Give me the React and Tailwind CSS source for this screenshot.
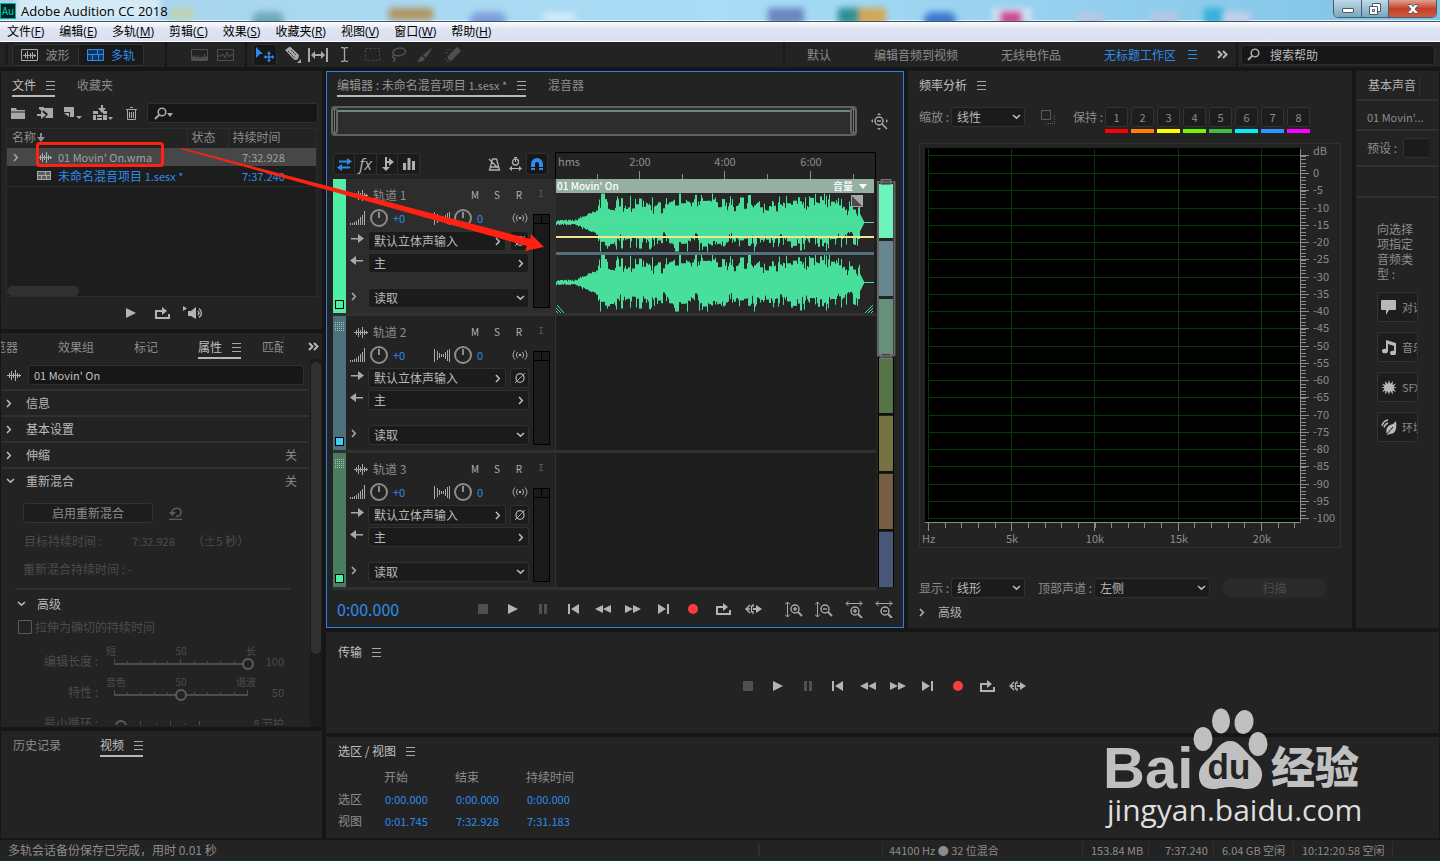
import React, { useState } from 'react';
import clsx from 'clsx';

const menus = [
  ['文件', 'F'], ['编辑', 'E'], ['多轨', 'M'], ['剪辑', 'C'], ['效果', 'S'],
  ['收藏夹', 'R'], ['视图', 'V'], ['窗口', 'W'], ['帮助', 'H'],
];

const tracks = [
  { id: 1, strip: 'bg-[#4df0a5]', dot: 'bg-[#4df0a5]', active: true },
  { id: 2, strip: 'bg-[#4a717c]', dot: 'bg-[#45ccf0]' },
  { id: 3, strip: 'bg-[#4a7c5f]', dot: 'bg-[#4df0a5]' },
];

const holds = [
  'bg-[#ff0000]', 'bg-[#ff8000]', 'bg-[#ffff00]', 'bg-[#72f500]',
  'bg-[#3fbf3f]', 'bg-[#00ecff]', 'bg-[#2d96ff]', 'bg-[#ff00ff]',
];

/* ---------- icons ---------- */

const Svg = ({ w, h, className, children }) => (
  <svg width={w} height={h} viewBox={`0 0 ${w} ${h}`} fill="currentColor" className={clsx('shrink-0', className)} aria-hidden="true">
    {children}
  </svg>
);

const MenuIcon = ({ className }) => (
  <Svg w={9} h={9} className={className}>
    <path d="M0 0h9v1H0zM0 4h9v1H0zM0 8h9v1H0z" />
  </Svg>
);

const Chevron = ({ down, className }) =>
  down ? (
    <Svg w={9} h={6} className={className}><path d="M1 1l3.5 3.2L8 1" fill="none" stroke="currentColor" strokeWidth="1.6" /></Svg>
  ) : (
    <Svg w={6} h={9} className={className}><path d="M1 1l3.3 3.5L1 8" fill="none" stroke="currentColor" strokeWidth="1.6" /></Svg>
  );

const DoubleChevron = () => (
  <Svg w={11} h={9}><path d="M1 1l3.5 3.5L1 8M6 1l3.5 3.5L6 8" fill="none" stroke="#b8b8b8" strokeWidth="2" /></Svg>
);

const WaveIcon = ({ className }) => (
  <Svg w={14} h={11} className={className}>
    <path d="M0 5h14v1H0zM2 3h1v5H2zM4 1h1v9H4zM6 3h1v5H6zM8 0h1v11H8zM10 3h1v5h-1zM12 4h1v3h-1z" />
  </Svg>
);

const SessionIcon = ({ className }) => (
  <Svg w={14} h={9} className={className}>
    <path d="M0 0h14v9H0z" />
    <path d="M1 1h7v3H1zM9 1h4v3H9zM1 5h3v3H1zM5 5h4v3H5zM10 5h3v3h-3z" fill="#000" opacity=".45" />
  </Svg>
);

const Search = ({ className }) => (
  <Svg w={13} h={13} className={className}>
    <circle cx="8" cy="5" r="3.8" fill="none" stroke="currentColor" strokeWidth="1.6" />
    <path d="M5.5 7.5L1 12" stroke="currentColor" strokeWidth="2" />
  </Svg>
);

const Loop = () => (
  <Svg w={15} h={12}>
    <path d="M0 3h6v2H2v5h11V7h2v5H0z" />
    <path d="M7 0l5 4-5 4V5H5V3h2z" />
  </Svg>
);

const Skip = () => (
  <Svg w={17} h={12}>
    <path d="M5 2L1 6l4 4M2 6h3M8 1v3M8 8v3M6.500 2.500v7" fill="none" stroke="currentColor" strokeWidth="1.3" />
    <path d="M8 5h3V2l6 4-6 4V7H8z" />
  </Svg>
);

const transport = [
  { label: '停止', dim: true, icon: <Svg w={10} h={10}><path d="M0 0h10v10H0z" /></Svg> },
  { label: '播放', icon: <Svg w={10} h={10}><path d="M0 0l10 5-10 5z" /></Svg> },
  { label: '暂停', dim: true, icon: <Svg w={8} h={10}><path d="M0 0h3v10H0zM5 0h3v10H5z" /></Svg> },
  { label: '移到上一个', icon: <Svg w={11} h={10}><path d="M0 0h2v10H0zM11 0v10L3 5z" /></Svg> },
  { label: '快退', icon: <Svg w={16} h={8}><path d="M8 0v8L0 4zM16 0v8L8 4z" /></Svg> },
  { label: '快进', icon: <Svg w={16} h={8}><path d="M0 0l8 4-8 4zM8 0l8 4-8 4z" /></Svg> },
  { label: '移到下一个', icon: <Svg w={11} h={10}><path d="M9 0h2v10H9zM0 0l8 5-8 5z" /></Svg> },
  { label: '录制', icon: <Svg w={10} h={10}><circle cx="5" cy="5" r="5" fill="#f93c3c" /></Svg> },
  { label: '循环播放', icon: <Loop /> },
  { label: '跳过所选项目', icon: <Skip /> },
];

const Transport = () => (
  <div className="flex items-center text-[#b4b4b4]">
    {transport.map((t) => (
      <button key={t.label} type="button" aria-label={t.label} className={clsx('flex h-5 w-[30px] items-center justify-center', t.dim && 'text-[#505050]')}>
        {t.icon}
      </button>
    ))}
  </div>
);

const ZoomIcon = ({ plus, horizontal }) => (
  <Svg w={18} h={17}>
    {horizontal ? (
      <path d="M1 2.500h16M3.500 0L1 2.500 3.500 5M14.500 0L17 2.500 14.500 5" fill="none" stroke="currentColor" />
    ) : (
      <path d="M2.500 1v15M0 3.500L2.500 1 5 3.500M0 13.500L2.500 16 5 13.500" fill="none" stroke="currentColor" />
    )}
    <g fill="none" stroke="currentColor" strokeWidth="1.4">
      <circle cx="10" cy={horizontal ? 10 : 8} r="4" />
      <path d={horizontal ? 'M13 13l4 4' : 'M13 11l4 4'} strokeWidth="2" />
      <path d={horizontal ? 'M8 10h4' : 'M8 8h4'} />
      {plus && <path d={horizontal ? 'M10 8v4' : 'M10 6v4'} />}
    </g>
  </Svg>
);

/* ---------- shared bits ---------- */

const Tab = ({ active, underline = true, menu, children, className }) => (
  <button
    type="button"
    className={clsx(
      'flex h-[26px] shrink-0 items-center gap-2.5 border-b-2 pt-1 whitespace-nowrap',
      active ? 'text-[#c0c0c0]' : 'text-[#8c8c8c]',
      active && underline ? 'border-[#b9b9b9]' : 'border-transparent',
      className,
    )}
  >
    {children}
    {menu && <MenuIcon className="text-[#a8a8a8]" />}
  </button>
);

const Select = ({ label, value, className, right }) => (
  <div className={clsx('relative h-5', className)}>
    <select aria-label={label} defaultValue={value} className="h-full w-full appearance-none rounded-[3px] border border-[#303030] bg-[#1b1b1b] pl-[5px] text-xs leading-4 text-[#b8b8b8]">
      <option>{value}</option>
    </select>
    <span className="pointer-events-none absolute inset-y-0 right-1 flex w-[9px] items-center justify-center text-[#b8b8b8]">
      <Chevron down={!right} />
    </span>
  </div>
);

const Rule = ({ className }) => <div className={clsx('h-[2px] shrink-0 bg-[#313131]', className)} />;

/* ---------- window chrome ---------- */

const TitleBar = () => (
  <header className="relative flex h-[22px] items-center overflow-hidden border-b border-[#3c5566] bg-linear-to-r from-[#a9d3ec] via-[#a9dcf6] to-[#7fc3e6] shadow-[inset_0_-1px_0_#e4f3fb]">
    <div className="absolute inset-0 blur-[3px]">
      <div className="absolute -top-1 left-4 h-6 w-36 bg-[#d5eaf5]" />
      <div className="absolute top-2 left-[170px] h-3 w-6 bg-[#bfd3b4]" />
      <div className="absolute top-3 left-[252px] h-4 w-8 rounded-full bg-[#6fa9b6]" />
      <div className="absolute top-2 left-[389px] h-3 w-11 bg-[#b0955f]" />
      <div className="absolute top-3 left-[470px] h-4 w-9 rounded-full bg-[#7e9edb]" />
      <div className="absolute top-3 left-[543px] h-3 w-8 bg-[#cfeaf9]" />
      <div className="absolute top-2 left-[768px] h-4 w-9 bg-[#6c86bf]" />
      <div className="absolute top-2 left-[838px] h-4 w-6 bg-[#2f8f95]" />
      <div className="absolute top-2 left-[858px] h-4 w-7 bg-[#d0a858]" />
      <div className="absolute top-3 left-[924px] h-4 w-8 rounded-full bg-[#3d78d0]" />
      <div className="absolute top-2 left-[992px] h-4 w-10 bg-[#cfe0f2]" />
      <div className="absolute top-3 left-[1001px] h-3 w-5 bg-[#d23f86]" />
      <div className="absolute top-3 left-[1076px] h-3 w-7 bg-[#b5c8e4]" />
      <div className="absolute top-3 left-[1150px] h-3 w-7 bg-[#b5c8e4]" />
      <div className="absolute top-2 left-[1204px] h-4 w-5 bg-[#35b0d8]" />
      <div className="absolute top-3 left-[1222px] h-3 w-7 bg-[#c5cfe8]" />
    </div>
    <span className="relative flex h-4 w-4 items-center justify-center border border-[#00b6a0] bg-[#00201f] text-[10px] leading-3 text-[#00d8bd]">Au</span>
    <h1 className="relative ml-[5px] font-['Open_Sans','Noto_Sans_CJK_SC',sans-serif] text-[13px] leading-4 text-black">Adobe Audition CC 2018</h1>
    <div className="relative mr-[3px] ml-auto flex h-[18px] self-start overflow-hidden rounded-b-[5px] border border-t-0 border-[#42606f] text-white">
      <button type="button" aria-label="最小化" className="flex w-7 items-end justify-center border-r border-[#42606f] bg-linear-to-b from-[#c0dae8] to-[#7ba4bb] pb-1">
        <span className="h-[5px] w-3 rounded-[1px] border border-[#4a5a66] bg-white" />
      </button>
      <button type="button" aria-label="还原" className="flex w-[27px] items-center justify-center border-r border-[#42606f] bg-linear-to-b from-[#c0dae8] to-[#7ba4bb]">
        <Svg w={12} h={12}>
          <path d="M3.500 .5h8v8h-8z" stroke="#4a5a66" />
          <path d="M.5 3.500h8v8h-8zM3.500 6.500h2v2h-2z" stroke="#4a5a66" fillRule="evenodd" />
        </Svg>
      </button>
      <button type="button" aria-label="关闭" className="flex w-[47px] items-center justify-center bg-linear-to-b from-[#e0a090] via-[#c4402c] to-[#d0583c]">
        <Svg w={12} h={10}>
          <path d="M1 .5h3l2 2 2-2h3v1L8 5l3 3.500v1H8l-2-2-2 2H1v-1L4 5 1 1.500z" stroke="#5a5a66" />
        </Svg>
      </button>
    </div>
  </header>
);

const MenuBar = () => (
  <nav className="flex h-5 items-center gap-[15px] border-b border-white bg-linear-to-b from-[#fbfcfe] via-[#dfe4f2] via-40% to-[#dbe0f2] pl-[7px] font-['Open_Sans','Noto_Sans_CJK_SC',sans-serif] text-xs leading-4 text-black">
    {menus.map(([name, key]) => (
      <button key={key} type="button" className="whitespace-nowrap">
        {name}(<u>{key}</u>)
      </button>
    ))}
  </nav>
);

const ToolBar = () => (
  <div className="flex h-[25px] items-center bg-[#232323] text-[#a8a8a8]">
    <Svg w={3} h={20} className="ml-[5px] text-[#111]"><path d="M1.500 0v20" stroke="currentColor" strokeWidth="3" strokeDasharray="1 1" /></Svg>
    <div className="ml-1 flex h-[22px] rounded-[3px] border border-[#333] bg-[#191919]">
      <button type="button" className="flex w-[65px] items-center justify-center gap-[7px] rounded-l-[3px] bg-[#202020] text-[#8c8c8c]">
        <Svg w={17} h={12} className="text-[#a8a8a8]">
          <path d="M.5.5h16v11H.5z" fill="none" stroke="currentColor" />
          <path d="M2 6.500h13M4.500 4v5M6.500 2v8M9.500 4v5M11.500 3v7M13.500 5v3" stroke="currentColor" />
        </Svg>
        波形
      </button>
      <button type="button" className="flex w-[65px] items-center justify-center gap-[7px] border-l border-[#333] text-[#2d8ceb]">
        <Svg w={17} h={12}><path d="M.5.5h16v11H.5zM.5 5.500h16M10.500.5v5M5.500 5.500v6M11.500 5.500v6" fill="#10375f" stroke="currentColor" /></Svg>
        多轨
      </button>
    </div>
    <span className="ml-[21px] h-full w-[2px] bg-[#161616]" />
    <Svg w={17} h={12} className="ml-6 text-[#505050]"><path d="M.5.5h16v11H.5z" fill="none" stroke="currentColor" /><path d="M1 11V8l2-2v2h1V7h1v2l1-1h1V6h1v3h2V7h1v1h2V5h1v3l2-1v4z" /></Svg>
    <Svg w={17} h={12} className="ml-[9px] text-[#505050]"><path d="M.5.5h16v11H.5zM1 7h3l2-2 2 4 2-6 2 5 1-2h3" fill="none" stroke="currentColor" /></Svg>
    <span className="ml-[11px] h-full w-[2px] bg-[#161616]" />
    <button type="button" aria-label="移动工具" className="ml-1.5 flex h-[22px] w-6 items-center justify-center rounded-[3px] border border-[#2e2e2e] bg-[#171717] text-[#2d8ceb]">
      <Svg w={18} h={15}>
        <path d="M0 0l7 7H4l-4 4z" />
        <path d="M13 4l2 3h-1.300v2.300H16V8l2.500 2L16 12v-1.300h-2.300V13H15l-2 2.500L11 13h1.300v-2.300H10V12l-2.500-2L10 8v1.300h2.300V7H11z" />
      </Svg>
    </button>
    <Svg w={18} h={17} className="ml-[7px]"><path d="M1 4l5-3.500L15 9l-1 4.500-3.500.5z" /><path d="M4 5l7 7M7 4l5 5" stroke="#232323" strokeDasharray="2 1" /><path d="M17 13v4h-4z" /></Svg>
    <Svg w={20} h={14} className="ml-1.5"><path d="M0 0h2v14H0zM18 0h2v14h-2zM3 7l4-4v3h6V3l4 4-4 4V8H7v3z" /></Svg>
    <Svg w={9} h={15} className="ml-3"><path d="M1 .5h2l1.500 1L6 .5h2M1 14.500h2l1.500-1 1.500 1h2M4.500 1.500v12" fill="none" stroke="currentColor" strokeWidth="1.300" /></Svg>
    <Svg w={15} h={13} className="ml-4 text-[#505050]"><path d="M.5.5h14v12H.5z" fill="none" stroke="currentColor" strokeDasharray="2 2" /></Svg>
    <Svg w={17} h={15} className="ml-2.5 text-[#505050]"><path d="M4 8C1 5 5 1 10 1s6 3 5 5-7 4-11 2zm0 0c-2 1-2 3 0 3s1 2-1 4" fill="none" stroke="currentColor" strokeWidth="1.500" /></Svg>
    <Svg w={16} h={15} className="ml-2.5 text-[#505050]"><path d="M16 0L9 11 6 8zM5 9l3 3c-1 2-4 3-8 3 2-1 2-5 5-6z" /></Svg>
    <Svg w={17} h={16} className="ml-[11px] text-[#505050]"><path d="M13 0l4 4-9 9c-2 2-6-2-4-4z" /><path d="M2 2.500h6M1 5.500h4M1 12.500h2M3 14.500h3" stroke="currentColor" strokeDasharray="1 1" /></Svg>
    <div className="ml-auto flex h-full items-center text-[#8c8c8c]">
      <span className="h-full w-[2px] bg-[#191919]" />
      <button type="button" className="ml-[22px]">默认</button>
      <button type="button" className="ml-[43px]">编辑音频到视频</button>
      <button type="button" className="ml-[43px]">无线电作品</button>
      <button type="button" className="ml-[43px] flex items-center gap-3 text-[#2d8ceb]">无标题工作区 <MenuIcon /></button>
      <button type="button" aria-label="更多工作区" className="ml-5"><DoubleChevron /></button>
      <span className="ml-2 h-full w-[2px] bg-[#171717]" />
    </div>
    <label className="mr-[5px] ml-[3px] flex h-5 w-[194px] items-center rounded-[3px] border border-[#2e2e2e] bg-[#171717] pl-[5px]">
      <Search />
      <input type="search" aria-label="搜索帮助" placeholder="搜索帮助" className="ml-2.5 w-full bg-transparent leading-4 text-[#a8a8a8] outline-none placeholder:text-[#b8b8b8]" />
    </label>
  </div>
);

/* ---------- left column ---------- */

const FilesPanel = () => (
  <section className="flex h-[258px] shrink-0 flex-col bg-[#232323]">
    <div className="flex gap-[22px] pl-[11px]">
      <Tab active menu>文件</Tab>
      <Tab>收藏夹</Tab>
    </div>
    <div className="mt-1.5 mr-1 flex h-5 items-center pl-2.5 text-[#a8a8a8]">
      <button type="button" aria-label="打开文件"><Svg w={14} h={11}><path d="M0 0h5l1 2h8v1.500H0zM0 4.500h14V11H0z" /></Svg></button>
      <button type="button" aria-label="导入文件" className="ml-3"><Svg w={16} h={12}><path d="M2 0h5v1h9v10H8l3-4-5-4v2L2 2z" /><path d="M0 7h4V4l5 4-5 4V9H0z" /></Svg></button>
      <button type="button" aria-label="新建" className="ml-[11px]"><Svg w={18} h={13}><path d="M0 0h10v10H6V5H0zM0 6h5v4z" /><path d="M12 9h6l-3 3z" /></Svg></button>
      <button type="button" aria-label="插入到多轨混音" className="ml-[11px]"><Svg w={20} h={16}><path d="M0 6h5v3H0zM10 6h4v3h-4zM0 10h3v5H0zM4 10h5v2H4zM10 10h4v5h-4zM4 13h5v2H4zM8 0h2v3h3L9 8 5 3h3z" /><path d="M15 12h5l-2.500 3z" /></Svg></button>
      <button type="button" aria-label="删除" className="ml-[13px]"><Svg w={11} h={13}><path d="M4 .5h3M0 2.500h11M1.500 3v9.500h8V3M3.500 5v6M5.500 5v6M7.500 5v6" fill="none" stroke="currentColor" /></Svg></button>
      <label className="ml-2.5 flex h-5 flex-1 items-center rounded-[3px] border border-[#303030] bg-[#171717] pl-1.5">
        <Search />
        <Svg w={6} h={4} className="mt-1"><path d="M0 0h6L3 4z" /></Svg>
        <input type="search" aria-label="搜索文件" className="w-full bg-transparent outline-none" />
      </label>
    </div>
    <div className="mx-[5px] mt-[5px] flex flex-1 flex-col border border-[#2c2c2c] bg-[#1d1d1d]">
      <table className="w-full table-fixed border-collapse text-left">
        <colgroup><col className="w-[180px]" /><col className="w-[41px]" /><col /></colgroup>
        <thead className="bg-[#232323] text-[#8c8c8c]">
          <tr className="h-[19px]">
            <th className="pb-[3px] pl-[5px] font-normal">
              <span className="flex items-center">名称<Svg w={8} h={9} className="ml-px"><path d="M3 0h2v4h3L4 9 0 4h3z" /></Svg></span>
            </th>
            <th className="border-l border-[#2e2e2e] pb-[3px] pl-1 font-normal">状态</th>
            <th className="border-l border-[#2e2e2e] pb-[3px] pl-1 font-normal">持续时间</th>
          </tr>
        </thead>
        <tbody>
          <tr className="h-[18px] bg-[#474747] text-[#a0a0a0]">
            <td colSpan={2}>
              <span className="flex items-center pl-1.5"><Chevron /><WaveIcon className="ml-[19px] text-[#b0b0b0]" /><span className="ml-1.5 text-[11px]">01 Movin' On.wma</span></span>
            </td>
            <td className="pl-3.5 text-[11px]">7:32.928</td>
          </tr>
          <tr className="h-5 border-b border-[#2c2c2c] text-[#2d8ceb]">
            <td colSpan={2}>
              <span className="flex items-center pl-[30px]"><SessionIcon className="text-[#a8a8a8]" /><span className="ml-[7px]">未命名混音项目 <span className="text-[11px]">1.sesx *</span></span></span>
            </td>
            <td className="pl-3.5 text-[11px]">7:37.240</td>
          </tr>
        </tbody>
      </table>
      <div className="mt-auto h-2.5 w-[72px] rounded-full bg-[#313131]" />
    </div>
    <div className="flex h-8 items-center justify-center gap-[19px] pl-[5px] text-[#b4b4b4]">
      <button type="button" aria-label="播放文件"><Svg w={10} h={10}><path d="M0 0l10 5-10 5z" /></Svg></button>
      <button type="button" aria-label="循环播放文件"><Loop /></button>
      <button type="button" aria-label="自动播放" className="-ml-1.5"><Svg w={20} h={14}><path d="M0 0l4 2.500L0 5zM5 5h3l5-4v12L8 10H5z" /><path d="M15 5q2 2 0 4M16 2.500q5 4.500 0 9" fill="none" stroke="currentColor" strokeWidth="1.400" /></Svg></button>
    </div>
  </section>
);

const Group = ({ title, open, state }) => (
  <>
    <Rule className="mx-px" />
    <button type="button" className="flex h-6 shrink-0 items-center pr-[13px] pl-[5px] text-[#b8b8b8]">
      <span className="w-5"><Chevron down={open} /></span>
      {title}
      {state && <span className="ml-auto text-[#8c8c8c]">{state}</span>}
    </button>
  </>
);

const Slider = ({ label, left, mid, right, value, unit, compact }) => (
  <label className="flex h-[31px] shrink-0 text-[#4c4c4c]">
    <span className="w-[97px] pt-2 text-right">{label} :</span>
    <span className="ml-2 flex w-[150px] flex-col">
      <span className="flex h-[13px] justify-between text-[10px] leading-3"><span>{left}</span><span>{mid}</span><span>{right}</span></span>
      <span className={clsx('relative flex flex-col', compact ? 'mr-[49px] ml-2' : 'mx-2')}>
        {compact ? (
          <Svg w={93} h={12} className="absolute">
            <path d="M0 6h1M18 6h75" stroke="currentColor" strokeWidth="2" />
            <path d="M26.500 1v10M42.500 3v6M56.500 1v10M71.500 3v6M85.500 1v10" stroke="currentColor" />
          </Svg>
        ) : (
          <Svg w={134} h={12} className="absolute">
            <path d="M0 6h134" stroke="currentColor" strokeWidth="2" />
            <path d="M.5 1v5M13.500 3v3M26.500 3v3M40.500 3v3M53.500 3v3M66.500 1v5M80.500 3v3M93.500 3v3M106.500 3v3M120.500 3v3M133.500 1v5" stroke="currentColor" />
          </Svg>
        )}
        <input
          type="range"
          disabled
          defaultValue={value}
          className="relative -mx-1.5 h-3 appearance-none bg-transparent [&::-webkit-slider-thumb]:h-3 [&::-webkit-slider-thumb]:w-3 [&::-webkit-slider-thumb]:appearance-none [&::-webkit-slider-thumb]:rounded-full [&::-webkit-slider-thumb]:border-2 [&::-webkit-slider-thumb]:border-[#5c5c5c] [&::-webkit-slider-thumb]:bg-[#232323]"
        />
      </span>
    </span>
    <span className="flex w-7 justify-end pt-2 text-[11px] whitespace-nowrap">{unit ?? value}</span>
  </label>
);

const PropertiesPanel = () => (
  <section className="flex min-h-[394px] flex-[1_1_0px] flex-col overflow-hidden bg-[#232323]">
    <div className="flex shrink-0">
      <div className="-ml-[7px] flex w-[289px] gap-10 overflow-hidden">
        <Tab>览器</Tab>
        <Tab>效果组</Tab>
        <Tab>标记</Tab>
        <Tab active menu>属性</Tab>
        <Tab className="-ml-[19px]">匹配</Tab>
      </div>
      <span className="h-5 w-px self-center bg-[#313131]" />
      <button type="button" aria-label="更多面板" className="ml-6"><DoubleChevron /></button>
    </div>
    <div className="flex min-h-0 flex-1">
      <div className="flex h-[366px] min-w-0 flex-1 flex-col overflow-hidden">
        <div className="mt-1.5 mb-1 flex h-5 shrink-0 items-center pl-1.5">
          <WaveIcon className="text-[#b0b0b0]" />
          <input aria-label="剪辑名称" defaultValue="01 Movin' On" className="mr-1.5 ml-[7px] h-5 min-w-0 flex-1 rounded-[3px] border border-[#303030] bg-[#171717] pl-[5px] text-[11px] text-[#c0c0c0]" />
        </div>
        <Group title="信息" />
        <Group title="基本设置" />
        <Group title="伸缩" state="关" />
        <Group title="重新混合" state="关" open />
        <div className="mt-2.5 flex h-5 shrink-0 items-center pl-[22px]">
          <button type="button" className="h-5 w-[130px] rounded-[3px] border border-[#333] bg-[#1d1d1d] text-[#8c8c8c]">启用重新混合</button>
          <Svg w={13} h={13} className="ml-4 text-[#5c5c5c]"><path d="M3 5c1-5 9-5 9 0 0 3-2 5-5 4M0 12.500h13" fill="none" stroke="currentColor" strokeWidth="1.600" /><path d="M0 5h7L3 9z" /></Svg>
        </div>
        <div className="mt-2 flex h-5 shrink-0 items-center pl-[23px] text-[#4c4c4c]">
          <span className="w-[108px]">目标持续时间 :</span>
          <span className="w-[60px] text-[11px]">7:32.928</span>
          <span>（±5 秒）</span>
        </div>
        <p className="mt-2 h-5 shrink-0 pl-[22px] leading-5 text-[#4c4c4c]">重新混合持续时间 : -</p>
        <Rule className="mt-[9px] mr-5 ml-3.5" />
        <button type="button" className="mt-1 flex h-5 shrink-0 items-center pl-4 text-[#b8b8b8]"><span className="w-5"><Chevron down /></span>高级</button>
        <label className="mt-[3px] flex h-5 shrink-0 items-center gap-[3px] pl-[17px] text-[#4c4c4c]">
          <input type="checkbox" className="h-3.5 w-3.5 appearance-none rounded-[1px] border border-[#5c5c5c]" />
          拉伸为确切的持续时间
        </label>
        <div className="mt-2 flex shrink-0 flex-col">
          <Slider label="编辑长度" left="短" mid="50" right="长" value={100} />
          <Slider label="特性" left="音色" mid="50" right="谐波" value={50} />
          <Slider label="最小循环" value={8} unit="8 节拍" compact />
        </div>
      </div>
      <div className="w-3 bg-[#1c1c1c] p-px pt-[3px]"><div className="h-[292px] rounded-full bg-[#313131]" /></div>
    </div>
  </section>
);

/* ---------- editor ---------- */

// [above, below] in px from the centre line for every column of the clip
const peaks = (() => {
  let seed = 7;
  const rnd = () => {
    seed = (seed * 16807) % 2147483647;
    return seed / 2147483647;
  };
  const size = (x) => {
    if (x < 21) return 1 + rnd() * 2;
    if (x < 41) return 2 + (x - 21) * 0.4 + rnd() * 3;
    if (x > 303) return Math.max(0.5, 10 - (x - 303) * 2);
    const base = 16 + 2 * Math.sin(x / 19) + 2 * Math.sin(x / 6);
    const r = rnd();
    const jump = r > 0.82 ? 7 + rnd() * 6 : r < 0.2 ? -5 * rnd() : rnd() * 6;
    return Math.min(29, base + jump - (x > 272 ? 4 : 0));
  };
  const out = [];
  let last = [1, 1];
  for (let x = 0; x < 318; x++) {
    if (x < 41 || x > 303 || rnd() > 0.3) last = [size(x), size(x)];
    out.push(last);
  }
  return out;
})();

const Wave = ({ cy }) => (
  <path d={peaks.map(([up, down], x) => `M${x + 0.5} ${cy - up}V${cy + down}`).join('')} stroke="#48df9c" fill="none" />
);

const Clip = () => (
  <div className="flex h-[134px] w-[318px] flex-col bg-[#262626]">
    <div className="flex h-3.5 items-center bg-[#95b0a3] px-px text-[10px] leading-3 font-medium text-white">
      01 Movin' On
      <span className="ml-auto">音量</span>
      <Svg w={8} h={5} className="mx-1.5"><path d="M0 0h8L4 5z" /></Svg>
    </div>
    <Svg w={318} h={120}>
      <Wave cy={29.5} />
      <path d="M0 29.500h318M0 89.500h318" stroke="#7fd99b" opacity=".4" />
      <Wave cy={89.5} />
      <path d="M0 60.500h318" stroke="#566f7c" strokeWidth="3" />
      <path d="M0 44h318" stroke="#efe78e" strokeWidth="2" />
      <path d="M295.500 2.500h11v11h-11z" fill="#4a4a4a" stroke="#a8a8a8" />
      <path d="M295 2h12v12z" fill="#a8a8a8" />
      <path d="M1 112l7 8M0 115l5 5M0 118l2 2M317 112l-8 8M317 115l-5 5M317 118l-2 2" stroke="#48df9c" />
    </Svg>
  </div>
);

const Knob = () => (
  <Svg w={20} h={20}>
    <circle cx="10" cy="10" r="8" fill="none" stroke="#8c8c8c" strokeWidth="2" />
    <path d="M10 4v6" stroke="#8c8c8c" strokeWidth="2" />
  </Svg>
);

const Track = ({ track }) => (
  <div className="flex h-[137px] border-b-[3px] border-[#303030]">
    <div className={clsx('flex w-[13px] shrink-0 flex-col items-center justify-between pt-1.5 pb-1', track.strip)}>
      <Svg w={9} h={10} className="text-[#a9c0c0]"><path d="M0 .5h9M0 2.500h9M0 4.500h9M0 6.500h9M0 8.500h9" stroke="currentColor" strokeDasharray="1 1" /></Svg>
      <span className={clsx('h-[9px] w-[9px] border border-black', track.dot)} />
    </div>
    <div className={clsx('w-[209px] shrink-0 pt-[5px]', track.active ? 'bg-[#2d2d2d]' : 'bg-[#232323]')}>
      <div className="flex h-[22px] items-center pl-2 text-[#8c8c8c]">
        <WaveIcon className="text-[#a8a8a8]" />
        <span className="ml-[5px]">轨道 {track.id}</span>
        <span className="mr-[3px] ml-auto flex text-[10px] text-[#b0b0b0]">
          <button type="button" aria-label="静音" className="w-[22px]">M</button>
          <button type="button" aria-label="独奏" className="w-[22px]">S</button>
          <button type="button" aria-label="录制准备" className="w-[22px]">R</button>
          <button type="button" aria-label="监视输入" className="w-[22px] font-['Liberation_Mono',monospace] text-[#585858]">I</button>
        </span>
      </div>
      <div className="flex">
        <div className="flex w-[183px] flex-col pl-1 text-[#a8a8a8]">
          <div className="flex h-6 items-center text-[#2d8ceb]">
            <Svg w={15} h={14} className="text-[#a8a8a8]"><path d="M.5 12v2M2.500 12v2M4.500 11v3M6.500 10v4M8.500 8v6M10.500 6v8M12.500 4v10M14.500 0v14" stroke="currentColor" /></Svg>
            <span className="ml-1 flex w-[70px] items-center gap-1 text-[11px]"><Knob />+0</span>
            <Svg w={16} h={13} className="-ml-[5px] text-[#a8a8a8]"><path d="M.5 0v13M3.500 2v9M5.500 4v5M7.500 5v3M9.500 5v3M11.500 3v7M13.500 1v11M15.500 0v13" stroke="currentColor" /></Svg>
            <span className="ml-[3px] flex items-center gap-1 text-[11px]"><Knob />0</span>
            <Svg w={16} h={10} className="mr-px ml-auto text-[#a8a8a8]"><path d="M3 .5q-4 4.500 0 9M5.500 2q-2.500 3 0 6M13 .5q4 4.500 0 9M10.500 2q2.500 3 0 6" fill="none" stroke="currentColor" /><circle cx="8" cy="5" r="1.300" /></Svg>
          </div>
          <div className="mt-px flex">
            <Svg w={13} h={9} className="mt-[3px] ml-px"><path d="M0 4h7V0l6 4.500L7 9V5.500H0z" /></Svg>
            <Select right label="输入" value="默认立体声输入" className="ml-1 flex-1" />
            <button type="button" aria-label="相位反转" className="ml-1 flex h-5 w-[19px] items-center justify-center rounded-[3px] border border-[#303030] bg-[#1b1b1b]">
              <Svg w={12} h={12}><path d="M1 11L11 1" stroke="currentColor" /><ellipse cx="6" cy="6" rx="4" ry="4.300" fill="none" stroke="currentColor" strokeWidth="1.300" /></Svg>
            </button>
          </div>
          <div className="mt-0.5 flex">
            <Svg w={13} h={9} className="mt-[3px]"><path d="M13 4H6V0L0 4.500 6 9V5.500h7z" /></Svg>
            <Select right label="输出" value="主" className="ml-[5px] flex-1" />
          </div>
          <div className="mt-[15px] flex">
            <Chevron className="mt-1 ml-px" />
            <Select label="自动化模式" value="读取" className="ml-[11px] flex-1" />
          </div>
        </div>
        <div className="mt-2 ml-1 flex h-[94px] w-[17px] flex-col border border-black bg-[#1a1a1a]">
          <div className="flex h-[9px] justify-center border-b border-black"><span className="w-px bg-black" /></div>
        </div>
      </div>
    </div>
    <div className="flex-1 border-l border-[#303030] bg-[#1d1d1d]">{track.active && <Clip />}</div>
  </div>
);

const TrackMap = () => (
  <Svg w={19} h={411}>
    <path d="M2 5h14v54H2z" fill="#6df4ba" />
    <path d="M2 62h14v55H2z" fill="#68868f" />
    <path d="M2 120h14v56H2z" fill="#67907b" />
    <path d="M2 179h14v55H2z" fill="#567447" />
    <path d="M2 237h14v55H2z" fill="#777243" />
    <path d="M2 295h14v55H2z" fill="#755e42" />
    <path d="M2 353h14v55H2z" fill="#495878" />
    <path d="M1.500 178v230M16.500 178v230M2 235h14M2 293h14M2 351h14" stroke="#000" />
    <path d="M1 2v175M17.500 2v175" stroke="#636363" strokeWidth="2" />
    <path d="M4 .5h10v5H4zM1 3h16M4 174.500h10v5H4zM1 177h16" fill="#444" stroke="#7c7c7c" />
  </Svg>
);

const Grip = () => <span className="flex w-[7px] justify-center gap-px rounded-[3px] border-2 border-[#666] bg-[#222]"><span className="w-px bg-[#777]" /></span>;

const EditorPanel = () => (
  <section className="flex flex-1 flex-col bg-[#232323] outline-1 -outline-offset-1 outline-[#2d7fe0]">
    <div className="flex gap-[22px] pl-[11px]">
      <Tab active menu>
        <span className="text-[#949494]">编辑器 : 未命名混音项目 <span className="text-[11px]">1.sesx *</span></span>
      </Tab>
      <Tab>混音器</Tab>
    </div>
    <div className="mt-[9px] flex h-[30px] items-center pl-[5px]">
      <div className="flex h-[30px] flex-1 justify-between rounded-[4px] border-y-2 border-[#606060] bg-[#2d2d2d]">
        <Grip />
        <span className="mt-0.5 h-[2px] flex-1 bg-[#688b7a]" />
        <Grip />
      </div>
      <button type="button" aria-label="缩小重置" className="mr-4 ml-3.5 text-[#a8a8a8]">
        <Svg w={17} h={17}>
          <circle cx="8" cy="8" r="4" fill="none" stroke="currentColor" strokeWidth="1.500" />
          <path d="M6 8h4M11 11l5 5" stroke="currentColor" strokeWidth="1.600" />
          <path d="M6 2l2-2 2 2zM6 15l2 2 2-2zM2 6L0 8l2 2zM15 6l2 2-2 2z" />
        </Svg>
      </button>
    </div>
    <div className="mt-4 flex pl-[7px]">
      <div className="min-w-0 flex-1">
        <div className="flex h-[27px]">
          <div className="flex w-[222px] shrink-0 items-start pt-px text-[#b0b0b0]">
            <div className="flex h-[22px] divide-x divide-[#303030] rounded-[3px] border border-[#303030] bg-[#1b1b1b]">
              <button type="button" aria-label="输入/输出" className="flex w-[21px] items-center justify-center text-[#2d8ceb]"><Svg w={15} h={13}><path d="M2 2.500h8V0l5 3.500L10 7V4.500H2zM13 10.500H5V13L0 9.500 5 6v2.500h8z" /></Svg></button>
              <button type="button" aria-label="效果" className="w-[22px] font-['Open_Sans',sans-serif] text-base leading-5 italic">fx</button>
              <button type="button" aria-label="发送" className="flex w-[21px] items-center justify-center"><Svg w={13} h={14}><path d="M4 0h2v4h2V1l5 4-5 4V6H6v4h3l-4 4-4-4h3z" /></Svg></button>
              <button type="button" aria-label="EQ" className="flex w-[21px] items-center justify-center"><Svg w={12} h={12}><path d="M0 5h3v7H0zM4.500 0h3v12h-3zM9 3h3v9H9z" /></Svg></button>
            </div>
            <button type="button" aria-label="节拍器" className="ml-auto flex h-[22px] w-5 items-center justify-center"><Svg w={13} h={13}><path d="M4.500 1h4l3 11h-10zM2 9h9M1 1l9 9" fill="none" stroke="currentColor" strokeWidth="1.300" /></Svg></button>
            <button type="button" aria-label="时间拉伸" className="flex h-[22px] w-[22px] items-center justify-center"><Svg w={13} h={14}><circle cx="6.500" cy="5" r="3" fill="none" stroke="currentColor" strokeWidth="1.300" /><path d="M5 0h3v1H5zM6 3h1v2H6zM0 11.500L3 9v2h7V9l3 2.500-3 2.500v-2H3v2z" /></Svg></button>
            <button type="button" aria-label="对齐" className="mr-[7px] flex h-[22px] w-[22px] items-center justify-center rounded-[3px] border border-[#303030] bg-[#171717] text-[#2d8ceb]">
              <Svg w={14} h={13}><path d="M1 12V6a6 6 0 0 1 12 0v6H9V6a2 2 0 0 0-4 0v6z" /><path d="M1 9.500h4M9 9.500h4" stroke="#171717" /></Svg>
            </button>
          </div>
          <div className="flex-1 border-x border-t border-black text-[#8c8c8c]">
            <Svg w={319} h={26}>
              <path d="M41.500 21v5M83.500 18v8M126.500 21v5M168.500 18v8M211.500 21v5M254.500 18v8M297.500 21v5" stroke="#8c8c8c" />
              <g fontSize="11" textAnchor="middle">
                <text x="13" y="13">hms</text><text x="84" y="13">2:00</text><text x="169" y="13">4:00</text><text x="255" y="13">6:00</text>
              </g>
            </Svg>
          </div>
        </div>
        {tracks.map((t) => <Track key={t.id} track={t} />)}
      </div>
      <div className="mr-2 ml-px pt-[27px]"><TrackMap /></div>
    </div>
    <div className="flex h-[38px] shrink-0 items-center pl-[11px]">
      <span className="w-[131px] text-base leading-5 text-[#2d8ceb]">0:00.000</span>
      <Transport />
      <div className="ml-[17px] flex gap-3 text-[#a8a8a8]">
        <button type="button" aria-label="放大振幅"><ZoomIcon plus /></button>
        <button type="button" aria-label="缩小振幅"><ZoomIcon /></button>
        <button type="button" aria-label="放大时间"><ZoomIcon plus horizontal /></button>
        <button type="button" aria-label="缩小时间"><ZoomIcon horizontal /></button>
      </div>
    </div>
  </section>
);

/* ---------- analysis ---------- */

const SpectrumChart = () => {
  const rows = Array.from({ length: 21 }, (_, i) => ({ y: Math.round(30 + i * 17.25), label: i ? `-${i * 5}` : '0' }));
  const minor = Array.from({ length: 105 }, (_, i) => Math.round(13 + i * 3.45) + 0.5).filter((y) => y < 377);
  const cols = [9, 92, 175, 259, 342];
  return (
    <Svg w={422} h={405} className="text-[#8c8c8c]">
      <path d="M.5.5h421v404H.5z" fill="none" stroke="#303030" />
      <path d="M6 5h375v374H6z" fill="#000" />
      <path d={`M9 12.500h372${rows.map((r) => `M9 ${r.y + 0.5}h372`).join('')}`} stroke="#073807" />
      <path d={cols.map((x) => `M${x + 0.5} 6v371`).join('')} stroke="#073807" />
      <path d={`M381.500 6v372M6 379.500h376${minor.map((y) => `M382 ${y}h5`).join('')}M382 12.500h8${rows.map((r) => `M382 ${r.y + 0.5}h8`).join('')}`} stroke="#8c8c8c" />
      <path d={`${cols.map((x) => `M${x + 0.5} 380v8`).join('')}${Array.from({ length: 23 }, (_, i) => `M${Math.round(9 + i * 16.65) + 0.5} 380v5`).join('')}`} stroke="#8c8c8c" />
      <g fontSize="11">
        <text x="394" y="12">dB</text>
        {rows.map((r) => <text key={r.y} x="394" y={r.y + 4}>{r.label}</text>)}
        <text x="3" y="400">Hz</text>
        {['5k', '10k', '15k', '20k'].map((t, i) => <text key={t} x={cols[i + 1] + 1} y="400" textAnchor="middle">{t}</text>)}
      </g>
    </Svg>
  );
};

const FrequencyPanel = () => (
  <section className="flex w-[444px] shrink-0 flex-col bg-[#232323] px-[11px] text-[#8c8c8c]">
    <div className="flex"><Tab active underline={false} menu>频率分析</Tab></div>
    <div className="mt-2.5 flex h-[26px]">
      <span className="w-8 leading-5">缩放 :</span>
      <Select label="缩放" value="线性" className="w-[74px]" />
      <Svg w={14} h={14} className="mt-[3px] ml-4 text-[#5c5c5c]"><path d="M.5.5h9v9h-9z" fill="none" stroke="currentColor" /><path d="M5 13.500h9M13.500 5v9" stroke="currentColor" strokeDasharray="1 1" /></Svg>
      <span className="ml-[18px] w-8 leading-5">保持 :</span>
      <div className="flex gap-[3px]">
        {holds.map((color, i) => (
          <div key={color} className="flex flex-col gap-0.5">
            <button type="button" className="h-5 w-[23px] rounded-[3px] border border-[#333] bg-[#1d1d1d] text-[11px]">{i + 1}</button>
            <span className={clsx('h-1', color)} />
          </div>
        ))}
      </div>
    </div>
    <div className="mt-2.5"><SpectrumChart /></div>
    <div className="mt-[30px] flex h-5 items-center">
      <span className="w-8">显示 :</span>
      <Select label="显示" value="线形" className="w-[74px]" />
      <span className="ml-[13px] w-14 whitespace-nowrap">顶部声道 :</span>
      <Select label="顶部声道" value="左侧" className="w-[116px]" />
      <button type="button" disabled className="ml-3 h-5 w-[105px] rounded-full bg-[#2a2a2a] text-[#4c4c4c]">扫描</button>
    </div>
    <button type="button" className="mt-1 flex h-5 items-center text-[#b0b0b0]"><Chevron className="mr-[13px]" />高级</button>
  </section>
);

const soundTypes = [
  { label: '对话', icon: <Svg w={16} h={15}><path d="M1 0h13q1 0 1 1v8q0 1-1 1H8l-3 5v-5H1q-1 0-1-1V1q0-1 1-1z" /></Svg> },
  { label: '音乐', icon: <Svg w={16} h={15}><path d="M5 0l10 3v10h-2V6L7 4v7H5z" /><ellipse cx="4" cy="11" rx="3" ry="2.300" /><ellipse cx="12" cy="13" rx="3" ry="2.300" /></Svg> },
  { label: 'SFX', icon: <Svg w={16} h={15}><path d="M8 0l1.200 4L12 1l-.5 4L15 3.500 12.500 7H16l-3.500 1.500L15 12l-3.500-1.500.5 4L9.200 11 8 15l-1.200-4L4 14.500l.5-4L1 12l2.500-3.500L0 7h3.500L1 3.500 4.500 5 4 1l2.800 3z" /></Svg> },
  { label: '环境', icon: <Svg w={16} h={16}><path d="M15 2c1 7 0 13-6 13l-3 1C4 9 7 6 12 5z" /><path d="M6 15l6-7" stroke="#1d1d1d" /><path d="M1 7q1-5 6-6M3 8.500q1-3.500 4-4.500" fill="none" stroke="currentColor" strokeWidth="1.500" /></Svg> },
];

const EssentialSound = () => (
  <section className="flex w-[83px] shrink-0 flex-col bg-[#232323] px-px text-[#8c8c8c]">
    <div className="flex h-7 items-center pl-[11px]">
      <span className="w-[51px] text-[#b0b0b0]">基本声音</span>
      <span className="h-5 w-px bg-[#313131]" />
    </div>
    <Rule />
    <p className="h-7 pl-2.5 text-[11px] leading-8">01 Movin'...</p>
    <Rule />
    <label className="flex h-[34px] items-center pl-2.5 whitespace-nowrap">
      预设 :
      <input aria-label="预设" className="ml-1.5 h-5 w-[26px] rounded-l-[3px] border border-r-0 border-[#303030] bg-[#1b1b1b]" />
    </label>
    <Rule />
    <div className="h-[29px]" />
    <Rule />
    <p className="mt-[23px] ml-5 w-[42px] leading-[15px]">向选择<br />项指定<br />音频类<br />型 :</p>
    <div className="mt-[11px] ml-5 flex w-[41px] flex-col gap-2.5">
      {soundTypes.map((s) => (
        <button key={s.label} type="button" className="flex h-[30px] items-center overflow-hidden rounded-[3px] border border-[#333] bg-[#1d1d1d] pl-[3px] whitespace-nowrap">
          <span className="text-[#b8b8b8]">{s.icon}</span>
          <span className="ml-[5px] text-[11px]">{s.label}</span>
        </button>
      ))}
    </div>
  </section>
);

/* ---------- bottom ---------- */

const SelectionPanel = () => (
  <section className="h-[101px] bg-[#232323] pl-3">
    <div className="flex"><Tab active underline={false} menu className="text-[#a8a8a8]">选区 / 视图</Tab></div>
    <table className="mt-[3px] text-left text-[#8c8c8c]">
      <colgroup><col className="w-[46px]" /><col className="w-[71px]" /><col className="w-[71px]" /><col className="w-[71px]" /></colgroup>
      <thead>
        <tr className="h-[22px]"><td /><th className="font-normal">开始</th><th className="font-normal">结束</th><th className="font-normal">持续时间</th></tr>
      </thead>
      <tbody>
        {[['选区', '0:00.000', '0:00.000', '0:00.000'], ['视图', '0:01.745', '7:32.928', '7:31.183']].map(([name, ...times]) => (
          <tr key={name} className="h-[22px]">
            <th className="font-normal">{name}</th>
            {times.map((t, i) => <td key={i} className="pl-px text-[11px] text-[#2d8ceb]">{t}</td>)}
          </tr>
        ))}
      </tbody>
    </table>
  </section>
);

const StatusBar = () => (
  <footer className="mt-0.5 flex h-[21px] items-center border-b border-[#12303a] bg-[#232323] pl-2 text-[#8c8c8c]">
    <span>多轨会话备份保存已完成，用时 0.01 秒</span>
    <div className="ml-auto flex h-4 items-center divide-x divide-[#303030] text-[11px] whitespace-nowrap">
      <span className="h-3 w-[50px]" />
      <span className="h-3 w-[124px] border-l" />
      <span className="w-[200px] pl-1.5">44100 Hz ● 32 位混合</span>
      <span className="w-[66px] pl-2">153.84 MB</span>
      <span className="w-[65px] pl-4">7:37.240</span>
      <span className="w-20 pl-2">6.04 GB 空闲</span>
      <span className="w-[99px] pl-2">10:12:20.58 空闲</span>
      <span className="h-3 w-[47px]" />
    </div>
  </footer>
);

const Watermark = () => (
  <svg width="270" height="130" viewBox="0 0 270 130" className="pointer-events-none absolute right-[70px] bottom-[26px]" fill="#c0c0c0">
    <text x="3" y="83" fontSize="58" fontWeight="700" fontFamily="Liberation Sans, sans-serif">Bai</text>
    <ellipse cx="103" cy="34" rx="9.500" ry="12" />
    <ellipse cx="121" cy="16" rx="9" ry="12.500" />
    <ellipse cx="144" cy="17" rx="9.500" ry="12" transform="rotate(10 144 17)" />
    <ellipse cx="158" cy="39" rx="9.500" ry="12" />
    <path d="M130 36c9 0 13 8 20 15 8 7 13 13 12 20-1 9-7 13-15 13-6 0-10-2-17-2s-11 2-17 2c-9 0-14-5-14-14 0-8 5-12 11-18 7-8 11-16 20-16z" />
    <text x="129" y="74" fontSize="35" fontWeight="700" textAnchor="middle" fill="#232323" fontFamily="Liberation Sans, sans-serif">du</text>
    <text x="171" y="79" fontSize="44" fontWeight="900" fontFamily="Noto Sans CJK SC, sans-serif">经验</text>
    <text x="7" y="116" fontSize="30" fontWeight="500" fill="#dedede" fontFamily="Open Sans, sans-serif">jingyan.baidu.com</text>
  </svg>
);

// red box and arrow laid over the panels
const Annotation = () => (
  <svg width="560" height="270" className="pointer-events-none absolute top-0 left-0" fill="#ff2212">
    <rect x="37.500" y="143.500" width="125" height="22" rx="2" fill="none" stroke="#ff2212" strokeWidth="3" />
    <path d="M181 148.500l1-.5 348 91 1-5 13 13-19 4 2-5-346-97z" />
  </svg>
);

export default function App() {
  const [historyTab, setHistoryTab] = useState('视频');

  return (
    <div className="relative flex min-h-screen w-full min-w-[1280px] flex-col overflow-hidden bg-[#161616] font-['Noto_Sans_CJK_SC',sans-serif] text-xs leading-4">
      <TitleBar />
      <MenuBar />
      <ToolBar />
      <main className="mt-1 flex flex-1 gap-1 px-px">
        <aside className="flex w-[321px] shrink-0 flex-col gap-1">
          <FilesPanel />
          <PropertiesPanel />
          <section className="h-[107px] shrink-0 bg-[#232323]">
            <div className="flex gap-[39px] pl-3">
              {['历史记录', '视频'].map((name) => (
                <span key={name} onClick={() => setHistoryTab(name)}>
                  <Tab active={historyTab === name} menu={historyTab === name}>{name}</Tab>
                </span>
              ))}
            </div>
          </section>
        </aside>
        <div className="flex min-w-0 flex-1 flex-col gap-1">
          <div className="flex flex-1 gap-1">
            <EditorPanel />
            <FrequencyPanel />
            <EssentialSound />
          </div>
          <section className="flex h-[101px] flex-col bg-[#232323] pt-1.5">
            <div className="flex pl-3"><Tab active underline={false} menu className="text-[#a8a8a8]">传输</Tab></div>
            <div className="mt-3 flex justify-center"><Transport /></div>
          </section>
          <SelectionPanel />
        </div>
      </main>
      <StatusBar />
      <Watermark />
      <Annotation />
    </div>
  );
}
